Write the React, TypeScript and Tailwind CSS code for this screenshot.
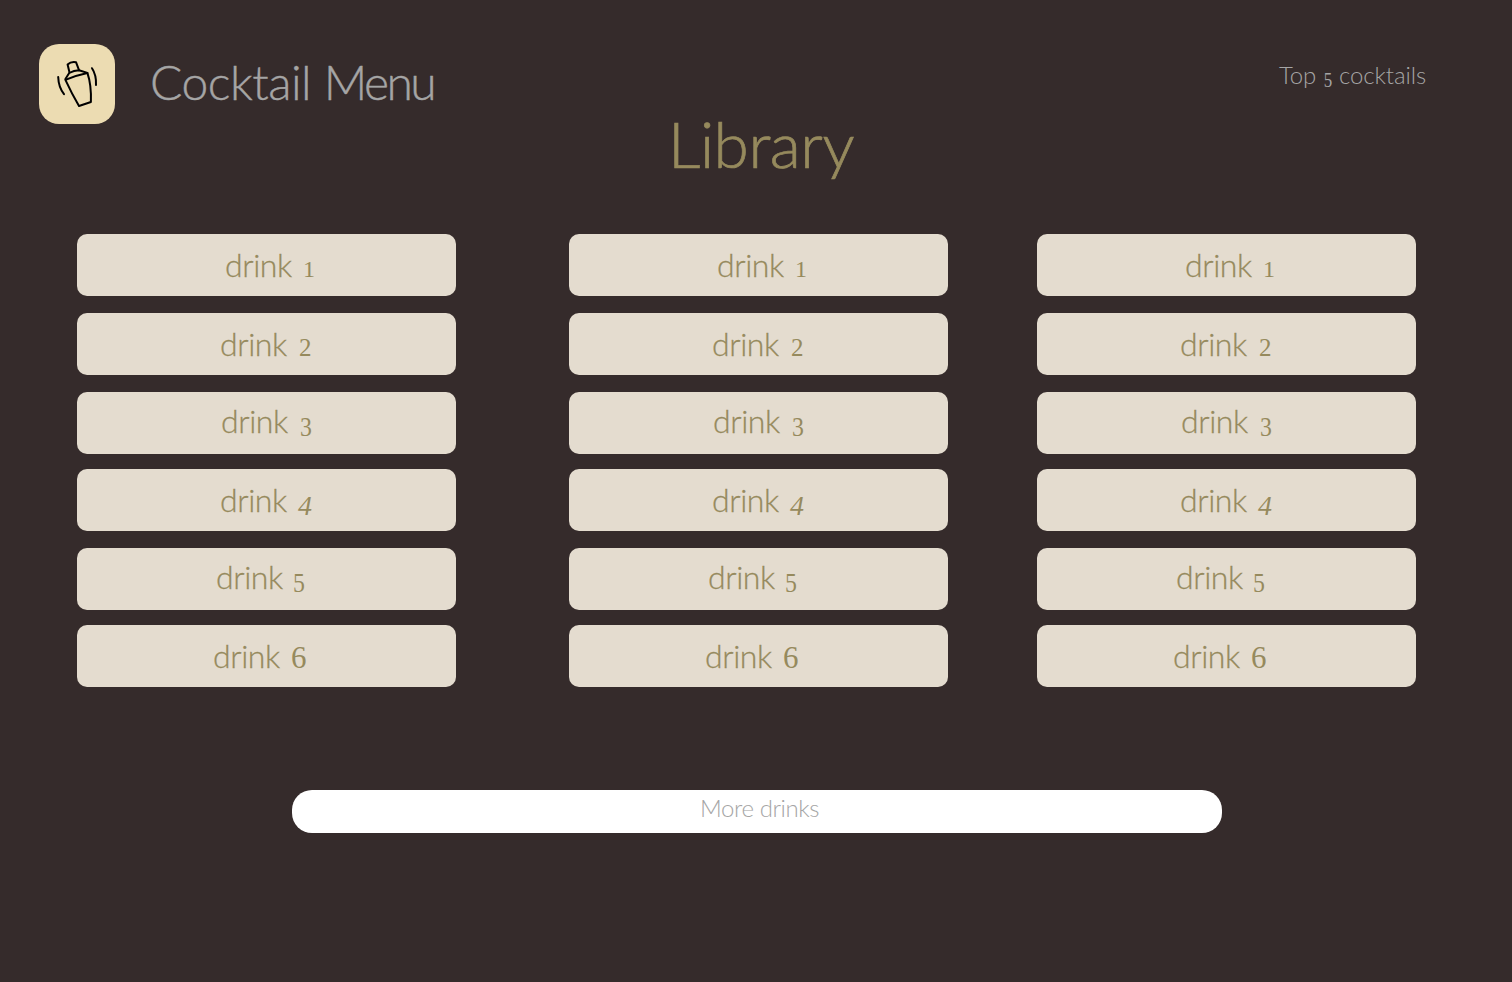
type Drink = {
  n: string;
  card: string;
  word: string;
  digit: string;
};

const drinks: Drink[] = [
  { n: "1", card: "pt-[15px] pl-[148px]", word: "w-[78px]", digit: "text-[24px]" },
  { n: "2", card: "mt-[17px] pt-[15px] pl-[143px]", word: "w-[79px]", digit: "text-[25px]" },
  { n: "3", card: "mt-[17px] pt-[13px] pl-[144px]", word: "w-[78px]", digit: "text-[28px] top-[3px] scale-x-85" },
  { n: "4", card: "mt-[15px] pt-[15px] pl-[143px]", word: "w-[78px]", digit: "text-[28px] top-[3px] italic" },
  { n: "5", card: "mt-[17px] pt-[13px] pl-[139px]", word: "w-[76px]", digit: "text-[28px] top-[3px] scale-x-85" },
  { n: "6", card: "mt-[15px] pt-[15px] pl-[136px]", word: "w-[78px]", digit: "text-[31px]" },
];

function Column() {
  return (
    <div className="flex w-[379px] flex-col">
      {drinks.map((d) => (
        <div
          key={d.n}
          className={`h-[62px] rounded-[10px] bg-[#e4dccf] text-[32px] leading-8 whitespace-nowrap text-[#968a5d] ${d.card}`}
        >
          <span className={`inline-block tracking-[-0.4px] [-webkit-text-stroke:0.3px_#968a5d] ${d.word}`}>drink </span>
          <span className={`relative inline-block font-['Liberation_Serif',serif] leading-none ${d.digit}`}>{d.n}</span>
        </div>
      ))}
    </div>
  );
}

function Shaker() {
  return (
    <svg
      className="h-20 w-[76px]"
      viewBox="0 0 76 80"
      fill="none"
      stroke="#000"
      strokeWidth="2"
      strokeLinejoin="round"
      strokeLinecap="round"
    >
      <path d="M30.5 28.5 28.6 20.5Q32 17.2 37 18.2L40 26.2" />
      <path d="M26.4 35 30.2 29Q35 26.3 40 26.2L48.4 28.9" />
      <path d="M26.4 35.8Q36 31.5 48.4 28.9Q52.5 41 51.9 58L40 62Q33 50 26.4 35.8Z" />
      <path d="M19.2 33Q19.5 43 25 50.2" />
      <path d="M53 24.2Q57.5 31 57 41" />
    </svg>
  );
}

export default function App() {
  return (
    <div className="flex h-[982px] w-[1512px] flex-col overflow-hidden bg-[#352b2b] pt-11 font-['Lato',sans-serif] font-light">
      <header className="flex h-20 pl-[39px] text-[#a5a5a5]">
        <div className="h-20 w-[76px] rounded-[20px] bg-[#ecdcb2]">
          <Shaker />
        </div>
        <h1 className="mt-[14px] ml-[35px] text-[48px] leading-[48px] tracking-[-0.5px] whitespace-nowrap [-webkit-text-stroke:0.4px_#a5a5a5]">
          Cocktail <span className="tracking-[-2.6px]">Menu</span>
        </h1>
        <a className="mt-[19px] mr-[86px] ml-auto text-2xl leading-6 tracking-[-0.1px] whitespace-nowrap">
          Top{" "}
          <span className="relative top-[3px] inline-block scale-x-85 font-['Liberation_Serif',serif] text-[20px] leading-none">
            5
          </span>{" "}
          cocktails
        </a>
      </header>
      <h2 className="-mt-[12px] ml-[668px] h-16 text-[64px] leading-[64px] tracking-[-0.5px] whitespace-nowrap text-[#968a5d] [-webkit-text-stroke:0.7px_#968a5d]">
        Library
      </h2>
      <main className="mt-[58px] flex pl-[77px]">
        <Column />
        <div className="ml-[113px]">
          <Column />
        </div>
        <div className="ml-[89px]">
          <Column />
        </div>
      </main>
      <button className="mt-[103px] ml-[292px] flex h-[43px] w-[930px] rounded-[20px] bg-white pt-[6px] pl-[408px] text-2xl leading-6 tracking-[-0.4px] whitespace-nowrap text-[#a5a5a5]">
        More drinks
      </button>
    </div>
  );
}
